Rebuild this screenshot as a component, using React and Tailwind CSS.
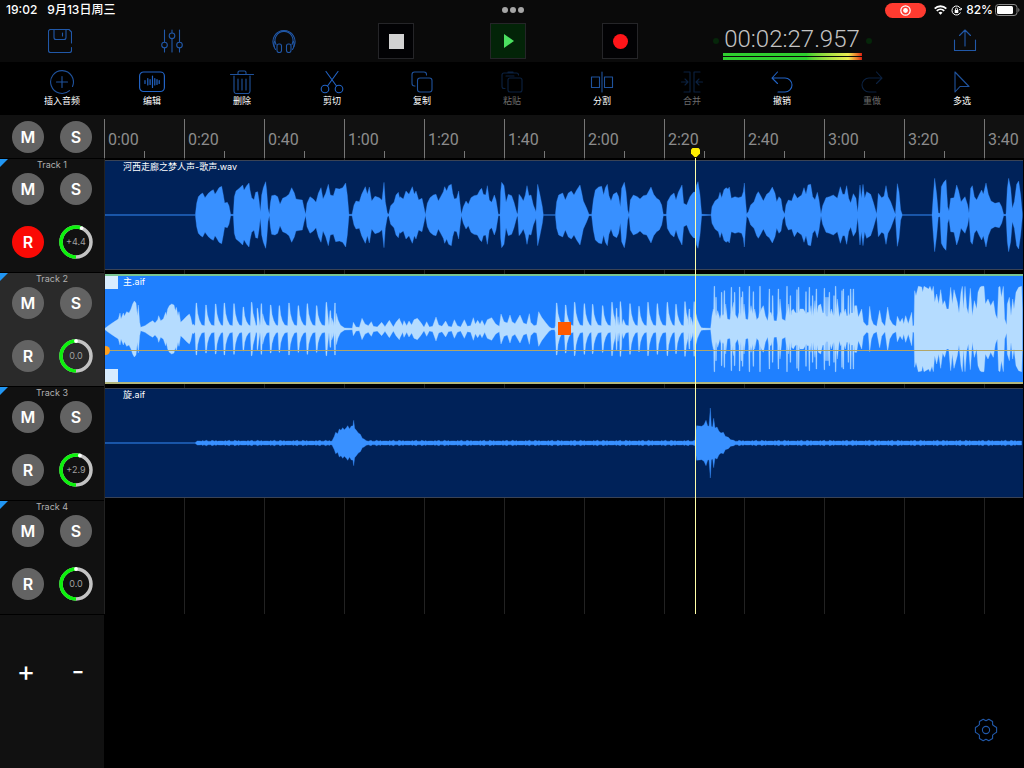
import React, { useState } from 'react';
import clsx from 'clsx';

// Amplitude envelopes: "x amp" pairs, three units to a pixel, every part with its own start
const parsePairs = (offset, text) =>
    text.split(',').map((pair) => {
        const [x, amp] = pair.trim().split(' ').map(Number);
        return [x + offset, amp];
    });

// A drum-like hit: sharp attack with a short decay
const parseHits = (offset, text) =>
    parsePairs(offset, text).flatMap(([x, amp]) => [
        [x - 4, 10],
        [x - 1, amp],
        [x + 1, amp],
        [x + 4, amp * 0.6],
        [x + 9, amp * 0.35],
        [x + 16, 12],
    ]).sort((a, b) => a[0] - b[0]);

// Loud peaks that fall back at once on both sides
const parseComb = (offset, text) =>
    parsePairs(offset, text).flatMap(([x, amp]) =>
        amp > 90
            ? [[x - 2, amp * 0.4], [x - 1, amp], [x + 1, amp], [x + 2, amp * 0.4]]
            : [[x, amp]]
    );

const makeHiss = (from, to) => {
    const points = [];
    for (let x = from; x < to; x += 4) {
        points.push([x, 5 + ((x * x + x * 3) % 17) / 5]);
    }
    return points;
};

const vocalWave = [
    ...parsePairs(-15, '15 1,286 1,290 35,295 55,302 62,308 66,315 52,325 65,333 72,340 76,345 62,350 70,357 82,365 86,370 60,374 36,382 38,387 28,392 2,400 2,403 55,408 72,418 80,428 90,432 74,440 88,447 96,450 75,455 52,462 46,467 68,473 70,477 45,481 10,485 60,490 82,497 100,500 75,504 20,508 2,511 35,515 58,525 60,533 55,540 32,548 50,558 55,567 62,575 82,583 66,588 48,600 46,607 45,612 22,617 2,621 35,630 55,640 48,648 38,655 65,663 82,669 48,677 65,685 92,691 60,700 58,707 80,718 78,728 82,737 96,742 60,747 2,756 2,762 30,768 42,778 40,785 62,796 85,802 62,808 84,815 42,825 56,838 52,846 44,852 98,856 40,862 6,866 2,872 28,882 38,888 60,895 68,899 50'),
    ...parsePairs(885, '0 55,10 48,18 72,27 62,37 85,43 62,48 72,56 45,66 50,73 18,76 1,82 35,90 52,100 60,108 62,115 42,122 55,130 70,134 85,140 72,146 88,154 92,158 65,163 48,170 50,176 72,180 35,184 2,190 25,198 42,205 32,213 52,222 58,232 60,240 75,245 80,250 62,257 60,262 88,268 45,275 38,283 60,288 45,295 2,300 2,302 70,305 98,312 88,318 38,325 62,335 58,342 38,350 8,353 2,357 62,363 55,370 42,376 60,381 88,387 58,393 60,400 30,408 10,413 92,420 60,427 25,430 1,466 1,470 40,476 60,488 66,496 45,505 66,514 72,522 60,530 75,540 90,546 62,550 42,560 20,567 2,575 2,580 45,586 75,596 84,605 86,611 60,616 82,622 92,627 58,633 42,640 62,650 68,656 55,661 25,665 80,673 98,678 70,683 15,687 2,691 45,700 60,712 55,720 48,730 58,740 60,753 84,761 62,770 50,778 45,785 30,790 2,799 2,802 40,812 58,822 66,828 45,835 68,846 90,851 35,860 30,870 55,880 68,887 70,890 90,894 100,900 60,905 2'),
    ...parsePairs(1785, '33 1,36 25,45 42,55 50,60 68,65 52,72 76,78 82,84 78,88 84,94 50,105 55,115 52,125 55,130 70,133 96,136 50,140 4,145 10,152 30,162 40,170 62,175 70,182 58,190 42,200 62,208 68,217 84,225 65,230 40,237 55,243 48,248 15,254 3,258 30,265 45,275 42,283 65,292 50,305 60,312 82,318 62,324 90,332 92,338 55,345 46,352 68,357 45,363 3,368 28,378 52,388 55,400 60,412 50,421 85,428 62,434 62,440 88,446 50,452 36,460 64,468 50,473 8,480 90,484 50,489 92,494 50,500 70,512 62,520 38,528 10,530 4,535 65,545 52,552 56,558 88,564 55,572 40,580 18,586 2,592 94,597 70,602 15,607 1,696 1,700 60,704 110,710 62,715 6,720 5,724 85,731 98,738 106,743 25,747 12,752 50,762 52,770 90,776 72,783 40,795 55,803 30,807 6,812 80,817 88,823 55,830 45,838 62,845 75,850 62,858 96,865 62,873 42,885 35,898 38,905 25,911 2,918 2,922 80,926 110,932 80,937 20,943 40,950 92,956 102,962 60,967 5'),
];

const mainWave = [
    ...parsePairs(-15, '15 2,25 10,40 20,55 30,60 48,63 30,70 48,73 38,80 52,87 48,93 60,98 75,103 84,108 78,112 40,115 72,119 20,122 5,135 10,150 20,158 25,165 18,173 28,176 40,182 25,190 30,197 50,199 40,203 60,208 70,215 75,222 72,226 55,229 65,234 40,237 52,242 20,250 28,260 38,268 45,272 35,277 12,280 14'),
    ...parseHits(-15, '289 78,318 72,347 75,373 78,402 76,430 66,455 80,472 62,484 76,512 72,538 70,567 78,595 70,622 76,650 70,679 80,691 55,705 78'),
    ...parsePairs(-15, '726 8,734 3,757 2,760 20,768 6,778 5,786 32,795 15,805 10,814 22,820 8,832 6,845 20,855 7,868 26,880 6,888 20,898 32'),
    ...parsePairs(885, '0 26,8 10,12 25,20 10,27 24,35 12,42 28,52 32,62 20,72 5,80 22,88 6,98 8,108 36,116 12,126 8,137 24,145 8,155 6,163 28,172 10,182 6,193 28,202 8,212 10,220 34,226 14,233 26,240 14,246 26,254 10,262 28,275 34,287 15,298 8,303 45,312 22,322 18,330 42,336 22,345 16,360 42,370 18,380 14,388 46,392 20,402 10,410 12,416 52,425 35,438 18,448 6,455 2,464 2'),
    ...parseHits(885, '470 78,497 72,524 80,553 76,578 74,608 70,636 80,650 62,661 82,690 76,717 68,744 80,772 76,802 80,828 74,855 82,868 60,883 82'),
    ...parsePairs(885, '904 4,910 3'),
    ...parseComb(1785, '12 3,32 2,36 40,40 60,43 128,48 95,53 55,60 30,65 110,69 40,73 115,77 75,82 30,90 28,94 125,97 60,101 80,104 110,108 40,113 30,119 126,124 95,128 112,132 75,137 30,144 28,148 128,153 70,160 112,164 60,170 28,176 35,180 128,184 60,190 70,196 40,203 24,208 120,213 50,218 100,222 25,230 24,235 120,240 90,246 30,256 25,261 128,266 75,271 100,275 55,280 60,285 50,291 118,296 125,300 60,310 60,315 52,318 112,322 50,328 125,333 70,338 100,345 85,349 120,355 70,362 75,368 48,373 122,378 95,384 95,388 110,394 60,402 100,407 128,412 90,418 35,422 50,426 115,430 120,436 60,440 40,445 100,452 120,460 120,464 70'),
    ...parsePairs(1785, '470 70,475 35,485 60,490 22,500 10,505 12,509 68,514 30,520 14,530 8,539 56,545 22,555 8,563 66,569 30,578 14,588 8,592 38,600 20,607 32,611 15,617 40,625 16,635 50,638 10,642 10,644 115,648 100,655 128,665 126,668 110,672 128,686 120,690 128,696 112,700 128,704 80,710 105,716 75,722 118,728 72,734 85,740 60,746 60,752 125,757 75,762 118,768 95,772 80,777 48,783 110,787 128,790 60,795 128,800 65,805 45,811 122,817 40,823 85,830 60,834 110,840 125,845 128,852 128,856 75,864 90,872 70,880 85,886 45,892 30,896 125,900 128,904 95,910 128,914 30,920 12,922 75,928 95,933 40,938 90,942 60,948 110,956 125,965 128,967 60'),
];

const spinWave = [
    ...parsePairs(0, '0 1,270 1'),
    ...makeHiss(277, 685),
    ...parsePairs(0, '688 20,692 32,698 28,703 42,708 38,713 46,718 40,724 46,728 52,734 42,738 50,744 52,746 68,749 44,754 38,760 30,766 26,772 14,777 12,784 7'),
    ...makeHiss(790, 1765),
    ...parsePairs(1485, '285 8,287 30,290 52,305 50,312 55,318 68,323 52,327 50,331 105,334 50,338 48,341 74,345 45,351 48,357 35,363 30,370 32,376 20,385 17,392 10,402 8'),
    ...makeHiss(1890, 2752),
];

const toPath = (points) => {
    const top = points.map(([x, amp]) => `${x} ${165 - amp}`);
    const bottom = points.map(([x, amp]) => `${x} ${165 + amp}`).reverse();
    return `M${top.join('L')}L${bottom.join('L')}Z`;
};

const Icon = ({ children }) => (
    <svg width="24" height="24" viewBox="0 0 24 24" fill="none" stroke="currentColor" strokeWidth="1.1" strokeLinecap="round" strokeLinejoin="round" aria-hidden="true">
        {children}
    </svg>
);

const SaveIcon = () => (
    <Icon>
        <path d="M23.5 14V3l-2.5-2.500H2.500a2 2 0 0 0-2 2v19a2 2 0 0 0 2 2h19a2 2 0 0 0 2-2V18.500" />
        <path d="M6 .5v8a2 2 0 0 0 2 2h8a2 2 0 0 0 2-2v-8M14.500 4v3" />
    </Icon>
);

const MixerIcon = () => (
    <Icon>
        <path d="M4.5 1v11.5M4.5 19v4M12 1v2.5M12 10v13M19.5 1v11.5M19.5 19v4" />
        <circle cx="4.5" cy="16" r="2.8" />
        <circle cx="12" cy="6.8" r="2.8" />
        <circle cx="19.5" cy="16" r="2.8" />
    </Icon>
);

const HeadphonesIcon = () => (
    <Icon>
        <path d="M2.2 17.5A11 11 0 1 1 21.8 17.5" />
        <path d="M4 15.5a9 9 0 1 1 16 0" />
        <path d="M2.5 12.5c-1 2.5-1 5 1 8M21.5 12.5c1 2.5 1 5-1 8" />
        <rect x="5" y="15" width="4.5" height="8.5" rx="2" />
        <rect x="14.5" y="15" width="4.5" height="8.5" rx="2" />
    </Icon>
);

const ShareIcon = () => (
    <Icon>
        <path d="M1.5 11v10.5h21V11M12 17V1M6.5 6.500 12 1l5.500 5.500" />
    </Icon>
);

const InsertIcon = () => (
    <Icon>
        <path d="M22.5 16.5A11.4 11.4 0 1 0 19.5 20.6M12 6.5v11M6.5 12h11" />
    </Icon>
);

const EditIcon = () => (
    <svg width="26" height="24" viewBox="0 0 26 24" fill="none" stroke="currentColor" strokeWidth="1.2" strokeLinecap="round" aria-hidden="true">
        <rect x=".6" y="2" width="24.8" height="19.5" rx="4" />
        <path d="M6 10.5v3M8.800 8.500v6.500M11.100 9.500v5M13.500 6v11.500M15.800 8.500v6.500M18 9.500v5M20.200 10.500v3" />
    </svg>
);

const DeleteIcon = () => (
    <Icon>
        <path d="M.5 4.5h23M8 4V2.5A1.5 1.5 0 0 1 9.5 1h5A1.5 1.5 0 0 1 16 2.5V4M4 6v15a2.5 2.5 0 0 0 2.5 2.5h11A2.5 2.5 0 0 0 20 21V6M8 9v11M12 9v11M16 9v11" />
    </Icon>
);

const CutIcon = () => (
    <Icon>
        <path d="M6 1.5 16.500 16M18 1.500 7.500 16" />
        <circle cx="5" cy="19" r="3.8" />
        <circle cx="19" cy="19" r="3.8" />
    </Icon>
);

const CopyIcon = () => (
    <Icon>
        <path d="M16.5 5v-.5A2.500 2.500 0 0 0 14 2H4.500A2.500 2.500 0 0 0 2 4.500v9A2.500 2.500 0 0 0 4.500 16H5" />
        <rect x="7.5" y="8" width="14.5" height="14" rx="2.5" />
    </Icon>
);

const PasteIcon = () => (
    <Icon>
        <path d="M18.5 5a2 2 0 0 0-2-2H4a2 2 0 0 0-2 2v11.5a2 2 0 0 0 2 2h1M8 3V2h5v1M6 6h8" />
        <rect x="8" y="8" width="14" height="14" rx="2" />
    </Icon>
);

const SplitIcon = () => (
    <Icon>
        <path d="M12 2v20M1.5 7H9.500v10.500H1.500zM14.500 7h8v10.500h-8z" />
    </Icon>
);

const MergeIcon = () => (
    <Icon>
        <path d="M4 2h6v20H4M20 2h-6v20h6M1.5 12H8M5 9l3 3-3 3M22.5 12H16M19 9l-3 3 3 3" />
    </Icon>
);

const UndoIcon = () => (
    <Icon>
        <path d="M7.5 2 2 8l5.500 5.500M2 8h13a7 7 0 0 1 0 14H8" />
    </Icon>
);

const RedoIcon = () => (
    <Icon>
        <path d="M16.5 2 22 8l-5.500 5.500M22 8H9a7 7 0 0 0 0 14h7" />
    </Icon>
);

const SelectIcon = () => (
    <Icon>
        <path d="M5 2v20l5-5.5h9z" />
    </Icon>
);

const GearIcon = () => (
    <Icon>
        <path d="M9.2 1.200 12 2.800l2.800-1.600 3.800 2.200v3.300l2 1.500 2 1.300v4.800l-2.200 1.300-1.800 1.500v3.500l-3.800 2.200L12 21.200l-2.800 1.600-3.800-2.200v-3.500l-1.800-1.500-2.200-1.300V9.500l2.200-1.300 1.800-1.500V3.400z" />
        <circle cx="12" cy="12" r="3.6" />
    </Icon>
);

const tools = [
    { label: '插入音频', icon: InsertIcon },
    { label: '编辑', icon: EditIcon, bright: true },
    { label: '删除', icon: DeleteIcon },
    { label: '剪切', icon: CutIcon, bright: true },
    { label: '复制', icon: CopyIcon },
    { label: '粘贴', icon: PasteIcon, disabled: true },
    { label: '分割', icon: SplitIcon },
    { label: '合并', icon: MergeIcon, disabled: true },
    { label: '撤销', icon: UndoIcon, bright: true },
    { label: '重做', icon: RedoIcon, disabled: true },
    { label: '多选', icon: SelectIcon },
];

const marks = ['0:00', '0:20', '0:40', '1:00', '1:20', '1:40', '2:00', '2:20', '2:40', '3:00', '3:20', '3:40'];

const initialTracks = [
    { id: 1, gain: '+4.4', angle: 22, armed: true, clip: { title: '河西走廊之梦人声-歌声.wav', wave: vocalWave } },
    { id: 2, gain: '0.0', angle: 0, armed: false, clip: { title: '主.aif', wave: mainWave } },
    { id: 3, gain: '+2.9', angle: 15, armed: false, clip: { title: '旋.aif', wave: spinWave } },
    { id: 4, gain: '0.0', angle: 0, armed: false, clip: null },
];

const StatusBar = () => (
    <div className="grid grid-cols-3 items-center h-5 pl-1.5 pr-1 text-xs font-medium text-white">
        <div className="flex gap-2.5 whitespace-nowrap">
            <span>19:02</span>
            <span>9月13日周三</span>
        </div>
        <div className="flex justify-center gap-0.5">
            <span className="size-1.5 rounded-full bg-[#a5a5a5]" />
            <span className="size-1.5 rounded-full bg-[#a5a5a5]" />
            <span className="size-1.5 rounded-full bg-[#a5a5a5]" />
        </div>
        <div className="flex items-center justify-end gap-1">
            <span className="flex items-center justify-center w-[41px] h-[15px] mr-1 rounded-full bg-[#ff3b30]">
                <svg width="11" height="11" viewBox="0 0 11 11" aria-hidden="true">
                    <circle cx="5.5" cy="5.5" r="4.7" fill="none" stroke="white" strokeWidth="1.2" />
                    <circle cx="5.5" cy="5.5" r="2.4" fill="white" />
                </svg>
            </span>
            <svg width="13" height="10" viewBox="0 0 13 10" fill="none" stroke="white" strokeWidth="1.9" aria-hidden="true">
                <path d="M.7 3.600a8.300 8.300 0 0 1 11.600 0M2.800 5.900a5.300 5.300 0 0 1 7.400 0" />
                <path d="M6.5 9.800 4.500 7.700a2.900 2.900 0 0 1 4 0z" fill="white" stroke="none" />
            </svg>
            <svg width="11" height="11" viewBox="0 0 11 11" fill="none" stroke="white" aria-hidden="true">
                <path d="M9.5 7.500A4.500 4.500 0 1 1 9.500 3.500M8 4.500l2 .5.5-2" />
                <rect x="3.7" y="5" width="3.6" height="3" fill="white" stroke="none" />
                <path d="M4.5 5V4a1 1 0 0 1 2 0v1" strokeWidth=".8" />
            </svg>
            <span>82%</span>
            <svg width="25" height="12" viewBox="0 0 25 12" className="-ml-0.5" aria-hidden="true">
                <rect x=".5" y=".5" width="21.5" height="11" rx="3" fill="none" stroke="#8a8a8a" />
                <rect x="2" y="2" width="16" height="8" rx="1.5" fill="white" />
                <path d="M23.3 4v4c1.500-.6 1.500-3.400 0-4z" fill="#8a8a8a" />
            </svg>
        </div>
    </div>
);

const IconButton = ({ label, children }) => (
    <button type="button" aria-label={label} className="text-[#2158a8]">{children}</button>
);

const TransportButton = ({ label, active, children }) => (
    <button
        type="button"
        aria-label={label}
        className={clsx('flex items-center justify-center size-9 border border-[#252528]', active ? 'bg-[#032408]' : 'bg-[#020204]')}
    >
        {children}
    </button>
);

const Transport = () => (
    <div className="grid grid-cols-[repeat(6,112fr)_230fr_118fr] items-center justify-items-center h-[42px] pl-1">
        <IconButton label="保存"><SaveIcon /></IconButton>
        <IconButton label="混音"><MixerIcon /></IconButton>
        <IconButton label="监听"><HeadphonesIcon /></IconButton>
        <TransportButton label="停止"><span className="size-[15px] bg-[#d2d2d2]" /></TransportButton>
        <TransportButton label="播放" active>
            <svg width="10" height="14" viewBox="0 0 10 14" className="ml-0.5" aria-hidden="true"><path d="M0 0v14l10-7z" fill="#4be160" /></svg>
        </TransportButton>
        <TransportButton label="录音"><span className="size-[15px] rounded-full bg-[#ff1519]" /></TransportButton>
        <div className="flex items-center gap-1 pl-0.5">
            <span className="size-1.5 rounded-full bg-[#06260a]" />
            <div className="flex flex-col items-center pt-0.5">
                <time className="font-[Roboto] font-light text-[24px] leading-7 text-[#c4c4c4]">00:02:27.957</time>
                <div className="flex flex-col gap-px w-[139px]">
                    <span className="h-[3px] bg-linear-to-r from-[#2fd02f] from-60% via-[#ecec52] via-90% to-[#d81010]" />
                    <span className="h-[3px] bg-linear-to-r from-[#2fd02f] from-60% via-[#ecec52] via-90% to-[#d81010]" />
                </div>
            </div>
            <span className="size-1.5 rounded-full bg-[#06260a]" />
        </div>
        <IconButton label="分享"><ShareIcon /></IconButton>
    </div>
);

const Toolbar = () => (
    <div className="flex h-[53px] px-[17px] pt-2 bg-black">
        {tools.map(({ label, icon: ToolIcon, disabled, bright }) => (
            <button key={label} type="button" disabled={disabled} className="flex flex-col items-center flex-1">
                <span className={disabled ? 'text-[#0b2140]' : bright ? 'text-[#2263c4]' : 'text-[#1f529c]'}>
                    <ToolIcon />
                </span>
                <span className={clsx('pt-px text-[9px] leading-3', disabled ? 'text-[#6b6b6b]' : 'text-white')}>{label}</span>
            </button>
        ))}
    </div>
);

const RoundButton = ({ label, name, on, onClick }) => (
    <button
        type="button"
        aria-label={name}
        aria-pressed={!!on}
        onClick={onClick}
        className={clsx('flex items-center justify-center size-8 rounded-full text-base font-semibold text-white', on ? 'bg-[#fa0a05]' : 'bg-[#636363]')}
    >
        {label}
    </button>
);

const GainKnob = ({ value, angle }) => {
    const rad = (angle * Math.PI) / 180;
    const x = 17 + 15 * Math.sin(rad);
    const y = 17 - 15 * Math.cos(rad);
    return (
        <button type="button" aria-label={`增益 ${value}`} className="grid place-items-center size-8">
            <svg width="34" height="34" viewBox="0 0 34 34" fill="none" strokeWidth="3.5" className="col-start-1 row-start-1 max-w-none -m-px" aria-hidden="true">
                <circle cx="17" cy="17" r="15" stroke="#c3c3c3" />
                <path d={`M17 32A15 15 0 ${angle > 0 ? 1 : 0} 1 ${x} ${y}`} stroke="#0cf20c" />
                <circle cx={x} cy={y} r="1.9" fill="white" />
            </svg>
            <span className="col-start-1 row-start-1 text-[9px] leading-3 text-[#a0a0a0]">{value}</span>
        </button>
    );
};

const TrackHeader = ({ track, selected, onArm }) => (
    <div className={clsx('relative flex flex-col h-[114px] px-3 border-t border-black', selected ? 'bg-[#2a2a2a]' : 'bg-[#111111]')}>
        <svg width="8" height="8" viewBox="0 0 8 8" className="absolute top-0 left-0" aria-hidden="true"><path d="M0 0h8L0 8z" fill="#2196f3" /></svg>
        <div className="pb-0.5 text-center text-[9px] leading-3 text-[#b0b0b0]">Track {track.id}</div>
        <div className="flex justify-between">
            <RoundButton label="M" name={`静音 ${track.id}`} />
            <RoundButton label="S" name={`独奏 ${track.id}`} />
        </div>
        <div className="flex justify-between mt-[21px]">
            <RoundButton label="R" name={`录音准备 ${track.id}`} on={track.armed} onClick={() => onArm(track.id)} />
            <GainKnob value={track.gain} angle={track.angle} />
        </div>
    </div>
);

const Clip = ({ clip, selected }) => (
    <div
        className={clsx(
            'relative h-[110px] mx-px overflow-hidden',
            selected ? 'bg-[#1f80ff] border-y-2 border-t-[#79c493] border-b-[#b3b67c]' : 'bg-[#002259] border-y border-[#3a4355]'
        )}
    >
        <div className={clsx('absolute left-0 w-[920px]', selected ? '-top-0.5' : '-top-px')}>
            <svg width="920" height="110" viewBox="0 0 2760 330" className="max-w-none" aria-hidden="true">
                <path d={toPath(clip.wave)} fill={selected ? '#b5dcff' : '#3890ff'} stroke={selected ? '#b5dcff' : '#3890ff'} strokeWidth="1" />
            </svg>
        </div>
        <div className="relative pl-[18px] text-[9px] leading-3 text-white whitespace-nowrap">{clip.title}</div>
        {selected && (
            <>
                <span className="absolute top-0 left-0 size-[13px] bg-[#d8ecff]" />
                <span className="absolute bottom-0 left-0 size-[13px] bg-[#d8ecff]" />
                <span className="absolute top-[74px] inset-x-0 h-px bg-[#b3a565]" />
                <span className="absolute top-[70px] -left-1 size-[9px] rounded-full bg-[#ff9f1c]" />
                <span className="absolute top-[46px] left-[453px] size-[13px] bg-[#ff5a00]" />
            </>
        )}
    </div>
);

const Ruler = () => (
    <div className="flex h-[43px] pt-1 overflow-hidden bg-[#111111]">
        {marks.map((mark) => (
            <div key={mark} className="flex shrink-0 w-20">
                <div className="w-10 border-l border-[#777777] pl-[3px] pt-[9px] font-[Roboto] text-base leading-6 text-[#8c8c8c]">{mark}</div>
                <div className="self-end w-10 h-[7px] border-l border-[#777777]" />
            </div>
        ))}
    </div>
);

const Timeline = ({ tracks, selectedId, onSelect }) => (
    <div className="relative">
        <Ruler />
        <div className="relative">
            <div className="absolute inset-0 flex overflow-hidden">
                {marks.map((mark) => (
                    <div key={mark} className="shrink-0 w-20 border-l border-[#222222]" />
                ))}
            </div>
            {tracks.map((track) => (
                <div key={track.id} className="relative h-[114px] pt-0.5" onClick={() => onSelect(track.id)}>
                    {track.clip && <Clip clip={track.clip} selected={track.id === selectedId} />}
                </div>
            ))}
        </div>
        <div className="absolute top-8 bottom-0 left-[587px] flex flex-col items-center w-[9px]">
            <svg width="9" height="11" viewBox="0 0 9 11" className="shrink-0" aria-hidden="true"><path d="M1.5 1h6L9 2.500v4L5.500 10h-2L0 6.500v-4z" fill="#ffee00" /></svg>
            <span className="flex-1 w-px bg-[#ffffa8]" />
        </div>
    </div>
);

const App = () => {
    const [tracks, setTracks] = useState(initialTracks);
    const [selectedId, setSelectedId] = useState(2);

    const toggleArm = (id) => {
        setTracks(tracks.map((track) => (track.id === id ? { ...track, armed: !track.armed } : track)));
    };

    return (
        <div className="flex flex-col min-h-screen bg-black font-[Inter,'Noto_Sans_CJK_SC',sans-serif]">
            <header className="bg-[#0a0a0a]">
                <StatusBar />
                <Transport />
                <Toolbar />
            </header>
            <main className="flex flex-1">
                <aside className="flex flex-col shrink-0 w-[104px] bg-[#111111]">
                    <div className="flex items-center justify-between h-[43px] px-3">
                        <RoundButton label="M" name="全部静音" />
                        <RoundButton label="S" name="全部独奏" />
                    </div>
                    {tracks.map((track) => (
                        <TrackHeader key={track.id} track={track} selected={track.id === selectedId} onArm={toggleArm} />
                    ))}
                    <div className="grid flex-1 grid-cols-2 content-start justify-items-center pt-10 border-t border-black text-[28px] leading-8 text-white">
                        <button type="button" aria-label="添加轨道" className="size-8">+</button>
                        <button type="button" aria-label="删除轨道" className="size-8">-</button>
                    </div>
                </aside>
                <section className="flex flex-col flex-1 min-w-0">
                    <Timeline tracks={tracks} selectedId={selectedId} onSelect={setSelectedId} />
                    <div className="flex flex-1 items-end justify-end p-[26px]">
                        <IconButton label="设置"><GearIcon /></IconButton>
                    </div>
                </section>
            </main>
        </div>
    );
};

export default App;
